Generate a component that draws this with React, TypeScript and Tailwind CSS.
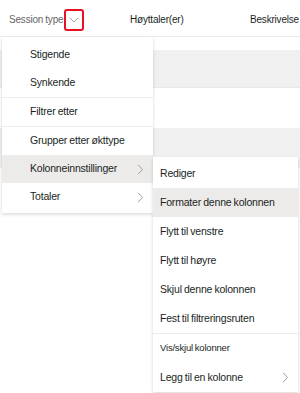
import React from "react";

const Chevron = ({ className = "" }: { className?: string }) => (
  <svg width="7" height="11" viewBox="0 0 7 11" className={className}>
    <path d="M1 0.8 L5.6 5.5 L1 10.2" fill="none" stroke="#a19f9d" strokeWidth="1" />
  </svg>
);

const txt = "tracking-[-0.2px] [word-spacing:-0.5px]";

const MainItem = ({ label, sub, active }: { label: string; sub?: boolean; active?: boolean }) => (
  <div
    className={`h-[28px] flex items-center pl-[28px] pr-[9px] text-[10.5px] text-[#201f1e] ${txt} ${
      active ? "bg-[#edebe9]" : ""
    }`}
  >
    <span className="flex-1">{label}</span>
    {sub && <Chevron />}
  </div>
);

const SubItem = ({
  label,
  sub,
  active,
  small,
}: {
  label: string;
  sub?: boolean;
  active?: boolean;
  small?: boolean;
}) => (
  <div
    className={`h-[29px] flex items-center pl-[7px] pr-[9px] ${small ? "text-[9.5px]" : "text-[10.5px]"} text-[#201f1e] ${txt} ${
      active ? "bg-[#edebe9]" : ""
    }`}
  >
    <span className="flex-1">{label}</span>
    {sub && <Chevron />}
  </div>
);

export default function App() {
  return (
    <div
      className="relative w-[300px] h-[393px] bg-white overflow-hidden"
      style={{ fontFamily: '"Liberation Sans", Arial, sans-serif' }}
    >
      {/* table header */}
      <div className="h-[37px] pt-[3px] flex items-center border-b border-[#edebe9] text-[10px] tracking-[-0.2px] [word-spacing:-0.5px]">
        <div className="w-[130px] flex items-center pl-[9px] text-[#666666]">
          <span>Session type</span>
          <div className="ml-[1px] w-[20px] h-[22px] border-2 border-[#e81123] rounded-[3px] flex items-center justify-center">
            <svg width="10" height="6" viewBox="0 0 10 6">
              <path d="M0.8 0.8 L5 5 L9.2 0.8" fill="none" stroke="#a19f9d" strokeWidth="1" />
            </svg>
          </div>
        </div>
        <div className="w-[120px] text-[#201f1e]">Høyttaler(er)</div>
        <div className="flex-1 text-[#201f1e] whitespace-nowrap">Beskrivelse</div>
      </div>
      {/* rows */}
      <div className="h-[13px]" />
      <div className="h-[38px] bg-[#f0f0f0] border-b border-[#e8e8e8]" />
      <div className="h-[40px]" />
      <div className="h-[40px] bg-[#f0f0f0]" />

      {/* main context menu */}
      <div className="absolute left-[2px] top-[37px] w-[151px] bg-white pt-[4px] pb-[2px] shadow-[0_1.6px_3.6px_rgba(0,0,0,0.16),0_0.3px_0.9px_rgba(0,0,0,0.12)]">
        <MainItem label="Stigende" />
        <MainItem label="Synkende" />
        <div className="h-px bg-[#edebe9]" />
        <MainItem label="Filtrer etter" />
        <div className="h-px bg-[#edebe9]" />
        <MainItem label="Grupper etter økttype" />
        <MainItem label="Kolonneinnstillinger" sub active />
        <MainItem label="Totaler" sub />
      </div>

      {/* submenu */}
      <div className="absolute left-[153px] top-[157px] w-[145px] bg-white pt-[2px] shadow-[0_1.6px_3.6px_rgba(0,0,0,0.16),0_0.3px_0.9px_rgba(0,0,0,0.12)]">
        <SubItem label="Rediger" />
        <SubItem label="Formater denne kolonnen" active />
        <SubItem label="Flytt til venstre" />
        <SubItem label="Flytt til høyre" />
        <SubItem label="Skjul denne kolonnen" />
        <SubItem label="Fest til filtreringsruten" />
        <div className="h-px bg-[#edebe9]" />
        <SubItem label="Vis/skjul kolonner" small />
        <SubItem label="Legg til en kolonne" sub />
      </div>
    </div>
  );
}
